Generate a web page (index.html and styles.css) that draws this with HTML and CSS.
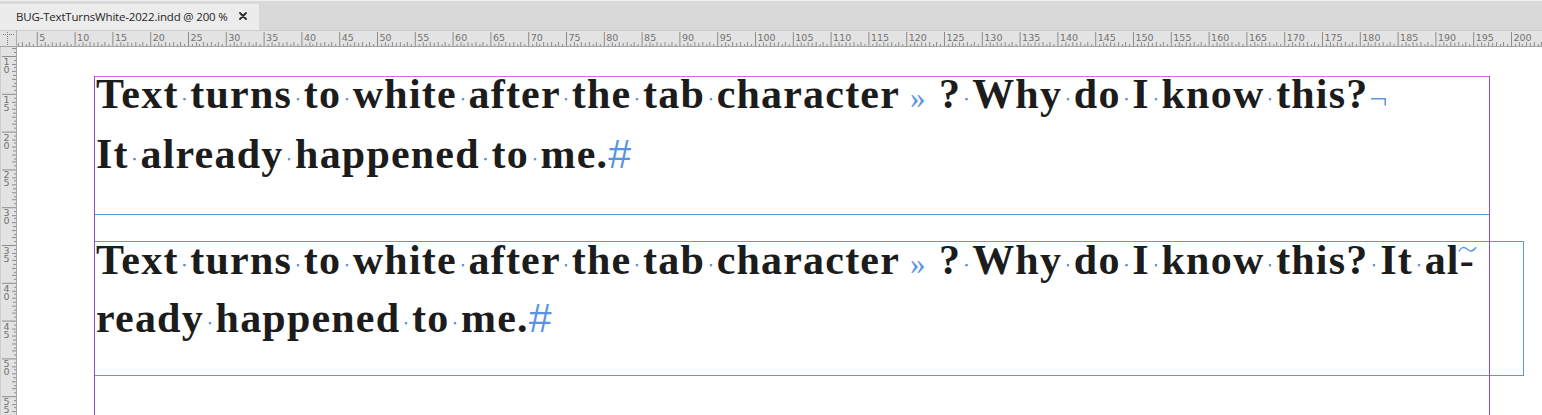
FILE: index.html
```html
<!DOCTYPE html>
<html>
<head>
<meta charset="utf-8">
<link rel="stylesheet" href="styles.css">
</head>
<body>
<div class="app">
  <div class="tabbar">
    <div class="doc-tab">
      <span class="tab-title">BUG-TextTurnsWhite-2022.indd @ 200 %</span>
      <svg class="tab-close" width="8" height="8" viewBox="0 0 8 8"><path d="M1 1L7 7M7 1L1 7" stroke="#2a2a2a" stroke-width="1.8" stroke-linecap="round"/></svg>
    </div>
  </div>
  <svg class="hruler" width="1542" height="17" viewBox="0 0 1542 17" shape-rendering="crispEdges">
    <defs>
      <pattern id="ht" patternUnits="userSpaceOnUse" x="-1" y="0" width="37.8" height="17">
        <rect x="0" y="2" width="1" height="14" fill="#8c8c8c"/>
        <rect x="3.78" y="14" width="1" height="2" fill="#8c8c8c"/>
        <rect x="7.56" y="12" width="1" height="4" fill="#8c8c8c"/>
        <rect x="11.34" y="14" width="1" height="2" fill="#8c8c8c"/>
        <rect x="15.12" y="12" width="1" height="4" fill="#8c8c8c"/>
        <rect x="18.9" y="13" width="1" height="3" fill="#8c8c8c"/>
        <rect x="22.68" y="12" width="1" height="4" fill="#8c8c8c"/>
        <rect x="26.46" y="14" width="1" height="2" fill="#8c8c8c"/>
        <rect x="30.24" y="12" width="1" height="4" fill="#8c8c8c"/>
        <rect x="34.02" y="14" width="1" height="2" fill="#8c8c8c"/>
      </pattern>
    </defs>
    <rect x="0" y="0" width="1542" height="17" fill="#e3e3e3"/>
    <rect x="17" y="0" width="1525" height="17" fill="url(#ht)"/>
    <rect x="0" y="0" width="1542" height="1" fill="#cdcdcd"/>
    <rect x="0" y="16" width="1542" height="1" fill="#a3a3a3"/>
    <rect x="16" y="0" width="1" height="17" fill="#b0b0b0"/>
    <path d="M3 4.5H15M7.5 2V15" stroke="#7a7a7a" stroke-width="1" stroke-dasharray="1 1" fill="none"/>
    <g class="rl">
      <text x="39.3" y="10.6">5</text><text x="77.1" y="10.6">10</text><text x="114.9" y="10.6">15</text><text x="152.7" y="10.6">20</text>
      <text x="190.5" y="10.6">25</text><text x="228.3" y="10.6">30</text><text x="266.1" y="10.6">35</text><text x="303.9" y="10.6">40</text>
      <text x="341.7" y="10.6">45</text><text x="379.5" y="10.6">50</text><text x="417.3" y="10.6">55</text><text x="455.1" y="10.6">60</text>
      <text x="492.9" y="10.6">65</text><text x="530.7" y="10.6">70</text><text x="568.5" y="10.6">75</text><text x="606.3" y="10.6">80</text>
      <text x="644.1" y="10.6">85</text><text x="681.9" y="10.6">90</text><text x="719.7" y="10.6">95</text><text x="757.5" y="10.6">100</text>
      <text x="795.3" y="10.6">105</text><text x="833.1" y="10.6">110</text><text x="870.9" y="10.6">115</text><text x="908.7" y="10.6">120</text>
      <text x="946.5" y="10.6">125</text><text x="984.3" y="10.6">130</text><text x="1022.1" y="10.6">135</text><text x="1059.9" y="10.6">140</text>
      <text x="1097.7" y="10.6">145</text><text x="1135.5" y="10.6">150</text><text x="1173.3" y="10.6">155</text><text x="1211.1" y="10.6">160</text>
      <text x="1248.9" y="10.6">165</text><text x="1286.7" y="10.6">170</text><text x="1324.5" y="10.6">175</text><text x="1362.3" y="10.6">180</text>
      <text x="1400.1" y="10.6">185</text><text x="1437.9" y="10.6">190</text><text x="1475.7" y="10.6">195</text><text x="1513.5" y="10.6">200</text>
    </g>
  </svg>
  <div class="main">
    <svg class="vruler" width="17" height="368" viewBox="0 0 17 368" shape-rendering="crispEdges">
      <defs>
        <pattern id="vt" patternUnits="userSpaceOnUse" x="0" y="9" width="17" height="37.8">
          <rect x="2" y="0" width="14" height="1" fill="#8c8c8c"/>
          <rect x="14" y="3.78" width="2" height="1" fill="#8c8c8c"/>
          <rect x="12" y="7.56" width="4" height="1" fill="#8c8c8c"/>
          <rect x="14" y="11.34" width="2" height="1" fill="#8c8c8c"/>
          <rect x="12" y="15.12" width="4" height="1" fill="#8c8c8c"/>
          <rect x="13" y="18.9" width="3" height="1" fill="#8c8c8c"/>
          <rect x="12" y="22.68" width="4" height="1" fill="#8c8c8c"/>
          <rect x="14" y="26.46" width="2" height="1" fill="#8c8c8c"/>
          <rect x="12" y="30.24" width="4" height="1" fill="#8c8c8c"/>
          <rect x="14" y="34.02" width="2" height="1" fill="#8c8c8c"/>
        </pattern>
      </defs>
      <rect x="0" y="0" width="17" height="368" fill="#e3e3e3"/>
      <rect x="0" y="0" width="16" height="368" fill="url(#vt)"/>
      <rect x="0" y="0" width="1" height="368" fill="#cdcdcd"/>
      <rect x="16" y="0" width="1" height="368" fill="#a3a3a3"/>
      <g class="rl">
        <text x="3.5" y="18">1</text><text x="3.5" y="26">0</text>
        <text x="3.5" y="55.8">1</text><text x="3.5" y="63.8">5</text>
        <text x="3.5" y="93.6">2</text><text x="3.5" y="101.6">0</text>
        <text x="3.5" y="131.4">2</text><text x="3.5" y="139.4">5</text>
        <text x="3.5" y="169.2">3</text><text x="3.5" y="177.2">0</text>
        <text x="3.5" y="207">3</text><text x="3.5" y="215">5</text>
        <text x="3.5" y="244.8">4</text><text x="3.5" y="252.8">0</text>
        <text x="3.5" y="282.6">4</text><text x="3.5" y="290.6">5</text>
        <text x="3.5" y="320.4">5</text><text x="3.5" y="328.4">0</text>
        <text x="3.5" y="358.2">5</text><text x="3.5" y="366.2">5</text>
      </g>
    </svg>
    <div class="canvas">
      <div class="frame frame-one">
        <div class="story story-one">
          <div class="line">Text<span class="s"> </span>turns<span class="s"> </span>to<span class="s"> </span>white<span class="s"> </span>after<span class="s"> </span>the<span class="s"> </span>tab<span class="s"> </span>character<span class="tabchar">»</span>?<span class="s"> </span>Why<span class="s"> </span>do<span class="s"> </span>I<span class="s"> </span>know<span class="s"> </span>this?<svg class="brk" width="17" height="9" viewBox="0 0 17 9"><path d="M1 1.75H15.25V8.5" fill="none" stroke="#5a93e4" stroke-width="1.5"/></svg></div>
          <div class="line">It<span class="s"> </span>already<span class="s"> </span>happened<span class="s"> </span>to<span class="s"> </span>me.<span class="eos">#</span></div>
        </div>
      </div>
      <div class="frame frame-two">
        <div class="story story-two">
          <div class="line">Text<span class="s"> </span>turns<span class="s"> </span>to<span class="s"> </span>white<span class="s"> </span>after<span class="s"> </span>the<span class="s"> </span>tab<span class="s"> </span>character<span class="tabchar">»</span>?<span class="s"> </span>Why<span class="s"> </span>do<span class="s"> </span>I<span class="s"> </span>know<span class="s"> </span>this?<span class="s"> </span>It<span class="s"> </span>al<span class="dh">-<svg class="dh-mark" width="19" height="7" viewBox="0 0 19 7"><path d="M1 5.5C3 1 6 0.5 9 3S15 6.5 18 1.2" fill="none" stroke="#5a93e4" stroke-width="1.4"/></svg></span></div>
          <div class="line">ready<span class="s"> </span>happened<span class="s"> </span>to<span class="s"> </span>me.<span class="eos">#</span></div>
        </div>
      </div>
      <div class="guide guide-top"></div>
      <div class="guide guide-left"></div>
      <div class="guide guide-right"></div>
    </div>
  </div>
</div>
</body>
</html>
```

FILE: styles.css
```css
html, body {
  margin: 0;
  padding: 0;
}
body {
  width: 1542px;
  height: 415px;
  overflow: hidden;
  background: #ffffff;
  font-family: "Open Sans", "Noto Sans", sans-serif;
}
.app {
  display: flex;
  flex-direction: column;
  width: 1542px;
  height: 415px;
}
.tabbar {
  height: 30px;
  box-sizing: border-box;
  padding-top: 3px;
  background: #d9d9d9;
  border-top: 1px solid #efefef;
  display: flex;
  flex-shrink: 0;
}
.doc-tab {
  width: 259px;
  height: 26px;
  box-sizing: border-box;
  background: #ececec;
  display: flex;
  align-items: center;
  padding-left: 16px;
  padding-bottom: 1px;
  gap: 11px;
}
.tab-title {
  font-size: 11.5px;
  color: #262626;
  letter-spacing: -0.18px;
  white-space: nowrap;
}
.tab-close {
  display: block;
  margin-top: -1px;
}
.hruler {
  display: block;
  flex-shrink: 0;
}
.rl text {
  font-family: "DejaVu Sans", "Liberation Sans", sans-serif;
  font-size: 9.5px;
  fill: #727272;
}
.main {
  display: flex;
  flex: 1;
  min-height: 0;
}
.vruler {
  display: block;
  flex-shrink: 0;
}
.canvas {
  flex: 1;
  position: relative;
  background: #ffffff;
  overflow: hidden;
}
.frame {
  position: absolute;
  box-sizing: border-box;
  border: 1px solid #5c9ad6;
}
.frame-one {
  left: 77px;
  top: 29px;
  width: 1396px;
  height: 139px;
}
.frame-two {
  left: 77px;
  top: 194px;
  width: 1430px;
  height: 135px;
}
.story {
  font-family: "Liberation Serif", "Times New Roman", serif;
  font-weight: bold;
  font-size: 42px;
  letter-spacing: 1.2px;
  line-height: 56px;
  color: #1c1c1c;
  padding-left: 1px;
}
.story-one {
  margin-top: -11px;
}
.story-two {
  margin-top: -9px;
  line-height: 55px;
}
.line {
  white-space: nowrap;
}
.s {
  background: radial-gradient(circle at 50% 0.67em, #5f97e6 0, #5f97e6 1px, rgba(95,151,230,0) 1.7px);
}
.tabchar {
  display: inline-block;
  width: 39px;
  box-sizing: border-box;
  padding-left: 10px;
  font-family: "Liberation Serif", serif;
  font-weight: normal;
  font-size: 31px;
  letter-spacing: 0;
  color: #5a93e4;
}
.brk {
  vertical-align: 2px;
  margin-left: 2px;
}
.eos {
  font-family: "Liberation Sans", sans-serif;
  font-weight: normal;
  font-size: 41px;
  color: #5a93e4;
  letter-spacing: 0;
}
.dh {
  position: relative;
}
.dh-mark {
  position: absolute;
  left: -2px;
  top: 9px;
}
.guide {
  position: absolute;
}
.guide-top {
  left: 77px;
  top: 29px;
  width: 1396px;
  height: 1px;
  background: #d46ee0;
}
.guide-left {
  left: 77px;
  top: 29px;
  bottom: 0;
  width: 1px;
  background: #8a4fcc;
}
.guide-right {
  left: 1472px;
  top: 29px;
  bottom: 0;
  width: 1px;
  background: #8a4fcc;
}
```
